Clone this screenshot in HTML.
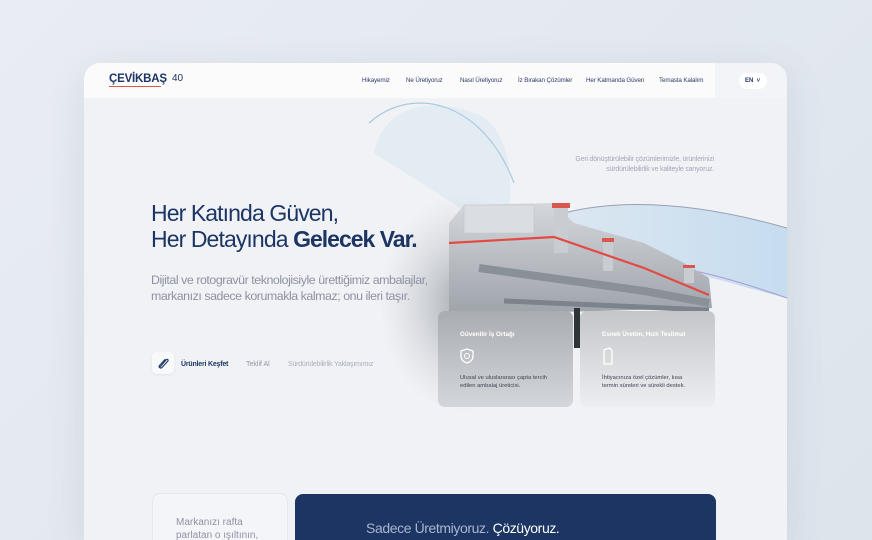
<!DOCTYPE html>
<html><head><meta charset="utf-8"><style>
*{margin:0;padding:0;box-sizing:border-box}
html,body{width:872px;height:540px;overflow:hidden}
body{background:linear-gradient(135deg,#e9edf3,#dde4ec);font-family:"Liberation Sans",sans-serif;position:relative}
.win{position:absolute;left:84px;top:63px;width:703px;height:477px;border-radius:16px 16px 0 0;background:#f1f2f6;overflow:hidden;box-shadow:0 10px 40px rgba(60,80,110,.12)}
.hdr{position:absolute;left:0;top:0;width:631px;height:35px;background:#fbfbfc}
.hdr2{position:absolute;left:631px;top:0;width:72px;height:35px;background:#f3f4f7}
.nav{position:absolute;top:14px;font-size:6.3px;color:#2c3e66;letter-spacing:-.15px;white-space:nowrap}
.abs{position:absolute}
h1{position:absolute;left:67px;top:137px;font-weight:400;font-size:23px;line-height:26px;color:#1c3563;letter-spacing:-.9px;white-space:nowrap}
h1 b{font-weight:700;letter-spacing:-1px}
.sub{position:absolute;left:67px;top:209px;font-size:12.4px;line-height:16px;color:#8d93a0;letter-spacing:-.45px;white-space:nowrap}
.card{position:absolute;top:248px;width:135px;height:96px;border-radius:7px}
.card .t{position:absolute;left:22px;top:20px;font-size:6.3px;font-weight:700;color:#fff;white-space:nowrap}
.card .d{position:absolute;left:22px;top:63px;font-size:5.8px;line-height:8px;color:#3f4450;white-space:nowrap}
</style></head><body>
<div class="win">
 <svg class="abs" style="left:0;top:0" width="703" height="477">
  <defs>
   <radialGradient id="g1" cx="0.5" cy="0.5" r="0.5"><stop offset="0" stop-color="#9aa0a6" stop-opacity=".9"/><stop offset="1" stop-color="#c8ccd2" stop-opacity="0"/></radialGradient>
   <linearGradient id="rib" x1="0" x2="1"><stop offset="0" stop-color="#dbe7f1"/><stop offset="1" stop-color="#c6dcef"/></linearGradient>
   <linearGradient id="mach" x1="0" y1="0" x2="0" y2="1"><stop offset="0" stop-color="#d4d7db"/><stop offset="1" stop-color="#9ea3aa"/></linearGradient>
  </defs>
  <path d="M290 90 C300 40 350 35 390 50 C420 60 430 100 425 150 L400 160 Z" fill="#dde9f2" opacity=".7"/>
  <path d="M285 60 C330 20 400 40 430 120" stroke="#a9c9e0" stroke-width="1.2" fill="none"/>
  <path d="M480 150 C560 130 650 150 703 165 L703 235 C640 220 560 190 480 195 Z" fill="url(#rib)"/>
  <path d="M480 150 C560 130 650 150 703 165" stroke="#9aa0b2" stroke-width="1" fill="none"/>
  <path d="M520 195 C600 200 660 220 703 235" stroke="#a99bd3" stroke-width="1" fill="none"/>
  <ellipse cx="380" cy="240" rx="85" ry="110" fill="url(#g1)"/>
  <path d="M365 160 L380 142 L470 140 L490 160 L560 180 L600 200 L625 215 L628 245 L365 252 Z" fill="url(#mach)"/>
  <rect x="380" y="142" width="70" height="28" fill="#dadde1" stroke="#c0c4c9" stroke-width=".5"/>
  <rect x="470" y="145" width="14" height="45" fill="#c9ccd0"/>
  <rect x="468" y="140" width="18" height="5" fill="#d9584e"/>
  <rect x="519" y="178" width="10" height="30" fill="#c9ccd0"/>
  <rect x="518" y="175" width="12" height="4" fill="#d9584e"/>
  <rect x="600" y="205" width="10" height="15" fill="#c9ccd0"/>
  <rect x="599" y="202" width="12" height="3" fill="#d9584e"/>
  <path d="M365 180 L470 174 L560 205 L625 232" stroke="#e24a43" stroke-width="2.2" fill="none"/>
  <path d="M395 205 L560 228 L625 240" stroke="#8a9098" stroke-width="8" fill="none"/>
  <path d="M420 238 L625 247" stroke="#7d838a" stroke-width="5" fill="none"/>
  <rect x="490" y="245" width="6" height="40" fill="#2f3438"/>
 </svg>
 <div class="hdr"></div><div class="hdr2"></div>
 <div class="abs" style="left:25px;top:10px;font-size:11.5px;font-weight:700;color:#1c3563;letter-spacing:-.2px">ÇEVİKBAŞ</div>
 <div class="abs" style="left:25px;top:23px;width:52px;height:1px;background:#d9584e"></div>
 <div class="abs" style="left:88px;top:10px;font-size:10px;color:#1c3563">40</div>
 <div class="nav" style="left:278px">Hikayemiz</div>
 <div class="nav" style="left:322px">Ne Üretiyoruz</div>
 <div class="nav" style="left:376px">Nasıl Üretiyoruz</div>
 <div class="nav" style="left:434px">İz Bırakan Çözümler</div>
 <div class="nav" style="left:502px">Her Katmanda Güven</div>
 <div class="nav" style="left:575px">Temasta Kalalım</div>
 <div class="abs" style="left:655px;top:10px;width:28px;height:16px;border-radius:8px;background:#fff;font-size:6px;font-weight:700;color:#1c3563;padding:5px 0 0 6px">EN &nbsp;˅</div>

 <h1>Her Katında Güven,<br>Her Detayında <b>Gelecek Var.</b></h1>
 <div class="sub">Dijital ve rotogravür teknolojisiyle ürettiğimiz ambalajlar,<br>markanızı sadece korumakla kalmaz; onu ileri taşır.</div>
 <div class="abs" style="left:430px;top:92px;font-size:7px;line-height:10px;color:#a3a9b8;text-align:right;width:200px;white-space:nowrap;letter-spacing:-.2px">Geri dönüştürülebilir çözümlerimizle, ürünlerinizi<br>sürdürülebilirlik ve kaliteyle sarıyoruz.</div>

 <div class="abs" style="left:68px;top:289px;width:22px;height:22px;border-radius:5px;background:#f8f9fb;box-shadow:0 1px 3px rgba(0,0,0,.06)">
  <svg width="22" height="22"><path d="M8 15 L14 8 C15.5 6.5 17 8 15.5 9.5 L10 15.5 C8.5 17 6 15 7.5 13.5 L13 7.5" fill="none" stroke="#1c3563" stroke-width="1.1" stroke-linecap="round"/></svg>
 </div>
 <div class="abs" style="left:97px;top:298px;font-size:7px;font-weight:700;color:#1c3563;letter-spacing:-.2px">Ürünleri Keşfet</div>
 <div class="abs" style="left:162px;top:298px;font-size:7px;color:#8d95a6">Teklif Al</div>
 <div class="abs" style="left:204px;top:298px;font-size:7px;color:#a8afbd;letter-spacing:-.2px">Sürdürülebilirlik Yaklaşımımız</div>

 <div class="card" style="left:354px;background:linear-gradient(180deg,#a9acb0,#d3d6db)">
  <div class="t">Güvenilir İş Ortağı</div>
  <svg class="abs" style="left:22px;top:37px" width="14" height="16"><path d="M7 1 L13 3 V8 C13 12 10 14 7 15 C4 14 1 12 1 8 V3 Z" fill="none" stroke="#fff" stroke-width="1.3"/><circle cx="7" cy="8" r="2.5" fill="none" stroke="#fff"/></svg>
  <div class="d">Ulusal ve uluslararası çapta tercih<br>edilen ambalaj üreticisi.</div>
 </div>
 <div class="card" style="left:496px;background:linear-gradient(180deg,#c4c6c9,#eceef1)">
  <div class="t">Esnek Üretim, Hızlı Teslimat</div>
  <svg class="abs" style="left:22px;top:36px" width="12" height="18"><path d="M2 3 L8 1 L10 4 V17 H2 Z" fill="none" stroke="#fff" stroke-width="1.3"/></svg>
  <div class="d">İhtiyacınıza özel çözümler, kısa<br>termin süreleri ve sürekli destek.</div>
 </div>

 <div class="abs" style="left:68px;top:430px;width:136px;height:70px;border-radius:8px;background:#f4f5f8;border:1px solid #e6e8ec"></div>
 <div class="abs" style="left:92px;top:453px;font-size:10px;line-height:13px;color:#8d93a0">Markanızı rafta<br>parlatan o ışıltının,</div>
 <div class="abs" style="left:211px;top:431px;width:421px;height:70px;border-radius:8px;background:#1c3563"></div>
 <div class="abs" style="left:282px;top:457px;font-size:14px;color:#a9b6cf;letter-spacing:-.4px">Sadece Üretmiyoruz. <span style="color:#fff">Çözüyoruz.</span></div>
</div>
</body></html>
